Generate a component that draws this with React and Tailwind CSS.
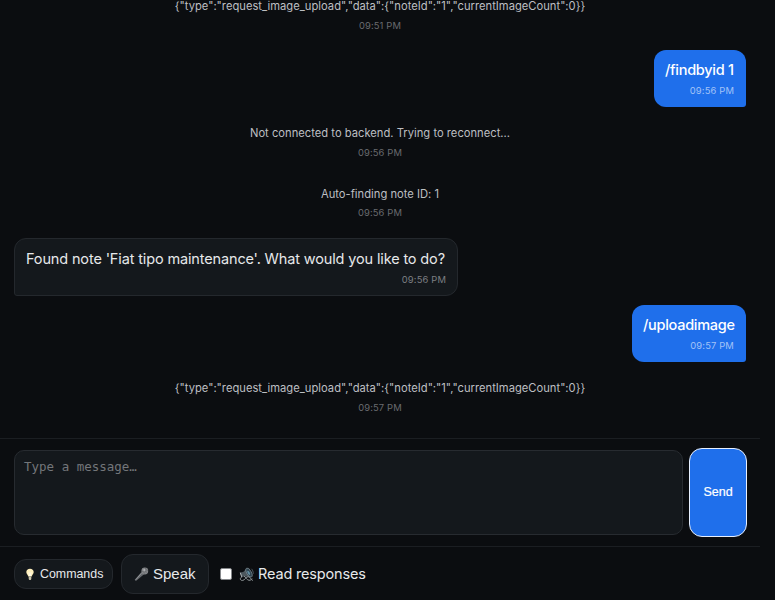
import React from "react";

const stamp = "text-[9.4px] leading-[12px] tracking-[0.15px]";

function SystemMessage({ text, time }) {
  return (
    <div className="h-[51px] shrink-0 pt-[8.5px] text-center">
      <div className="text-[11.2px] leading-[17px] tracking-[0.01px] text-[#bdbfc2]">{text}</div>
      <div className={"mt-[4.5px] text-[#696b6f] " + stamp}>{time}</div>
    </div>
  );
}

function UserMessage({ text, time, size }) {
  return (
    <div className={"h-[57px] shrink-0 self-end rounded-[12px] rounded-br-[3px] bg-[#1f6feb] pl-[11px] pr-[12px] pt-[9px] " + size}>
      <div className="whitespace-nowrap text-[14.5px] leading-[22px] tracking-[-0.28px] text-white font-[450]">{text}</div>
      <div className={"mt-[4px] text-right text-[#a3c3f7] " + stamp}>{time}</div>
    </div>
  );
}

function BulbIcon() {
  return (
    <svg className="h-[13px] w-[10px] shrink-0" viewBox="0 0 10 13">
      <path d="M5 .8C2.8.8 1.3 2.2 1.3 4.1c0 1.8 1.6 2.6 1.9 4.5h3.6c.3-1.9 1.9-2.7 1.9-4.5C8.7 2.2 7.2.8 5 .8Z" fill="#fff0bd" />
      <path d="M4 4.3 4.6 8h.8L6 4.3" fill="none" stroke="#ffffff" strokeWidth=".7" />
      <path d="M3.7 8.7h2.6v2.4l-.6.9H4.3l-.6-.9Z" fill="#c9c3a9" />
    </svg>
  );
}

function MicIcon() {
  return (
    <svg className="h-[15px] w-[15px] shrink-0" viewBox="0 0 15 15">
      <path d="M8.2 4.2.7 12.7l1.2 1.3 8.8-7.2Z" fill="#66696d" />
      <path d="m7.5 6.2-5.7 6.5" stroke="#a2a5a8" strokeWidth=".7" />
      <circle cx="10.8" cy="4" r="3.4" fill="#85878a" />
      <path d="m8 3.8 3 3M9.2 2l3.8 3.7M11 1l2.8 2.8M8.5 5l4-4M10 6.4 13.8 2.5" stroke="#55585b" strokeWidth=".4" />
      <circle cx="10.2" cy="3" r="1" fill="#b4b6b8" />
    </svg>
  );
}

function SpeakerIcon() {
  return (
    <svg className="h-[15px] w-[15px] shrink-0" viewBox="0 0 15 15">
      <path d="M1 5.5 4.2 5 8 1.2l4.6 8.5-6.9-.2L2.5 10Z" fill="#4d575d" />
      <ellipse cx="10" cy="5.6" rx="2.3" ry="5" transform="rotate(-28 10 5.6)" fill="#30444f" stroke="#7c8c95" strokeWidth=".7" />
      <ellipse cx="9.7" cy="5.8" rx="1" ry="2.3" transform="rotate(-28 9.7 5.8)" fill="#638fa4" />
      <path d="m1.3 5.7 1.4 4.2" stroke="#b1b5b7" strokeWidth="1" />
      <path d="M3.2 10c-2.5.4-2.5 3.5.1 3.5 2.8 0 3.3-3.8 5.9-3.8 2.5 0 2.2 3.1 4.7 3.8M5 9.2c1.9.6 2.6 3.9 5 4.1 1.7.1 2.6-.8 3-1.8" fill="none" stroke="#9aa0a3" strokeWidth=".9" />
      <path d="M12.4 1.8c1.2 1 1.9 3 1.9 5" fill="none" stroke="#68777f" strokeWidth=".7" />
    </svg>
  );
}

export default function App() {
  return (
    <div className="h-[600px] w-[775px] overflow-hidden bg-[#0b0d10] font-['Inter','Liberation_Sans',sans-serif]">
      <div className="flex h-full w-[760px] flex-col">
        <main className="flex h-[438px] shrink-0 flex-col justify-end gap-[9.5px] overflow-hidden pb-[15.5px] pl-[14px] pr-[14px]">
          <SystemMessage text={'{"type":"request_image_upload","data":{"noteId":"1","currentImageCount":0}}'} time="09:51 PM" />
          <UserMessage text="/findbyid 1" time="09:56 PM" size="w-[92px]" />
          <SystemMessage text="Not connected to backend. Trying to reconnect..." time="09:56 PM" />
          <SystemMessage text="Auto-finding note ID: 1" time="09:56 PM" />
          <div className="h-[58px] w-[444px] shrink-0 rounded-[12px] rounded-bl-[3px] border border-[#24282d] bg-[#14181c] px-[11px] pt-[9px]">
            <div className="whitespace-nowrap text-[14.5px] leading-[22px] tracking-[-0.14px] text-[#e6e8ea]">Found note 'Fiat tipo maintenance'. What would you like to do?</div>
            <div className={"mt-[4px] text-right text-[#7c7f83] " + stamp}>09:56 PM</div>
          </div>
          <UserMessage text="/uploadimage" time="09:57 PM" size="w-[114px]" />
          <SystemMessage text={'{"type":"request_image_upload","data":{"noteId":"1","currentImageCount":0}}'} time="09:57 PM" />
        </main>
        <form className="flex h-[108px] shrink-0 gap-[6px] border-t border-[#1b1e22] pl-[14px] pt-[11px]">
          <textarea
            className="h-[85px] w-[669px] shrink-0 resize-none rounded-[10px] border border-[#272b30] bg-[#14181c] px-[9px] py-[7px] font-['DejaVu_Sans_Mono',monospace] text-[12.5px] leading-[17px] outline-none placeholder:text-[#73767a]"
            placeholder="Type a message…"
          />
          <button type="button" className="-mt-[2px] h-[89px] w-[58px] shrink-0 rounded-[13px] border border-[#e7f0ff] bg-[#1f6feb] font-['Liberation_Sans',sans-serif] text-[12.5px] text-white [-webkit-text-stroke:0.2px_white]">
            Send
          </button>
        </form>
        <footer className="flex h-[54px] shrink-0 items-center border-t border-[#1b1e22] pl-[14px] pt-px text-[#e7e9eb]">
          <button type="button" className="flex h-[30px] w-[99px] items-center gap-[5px] rounded-[12px] border border-[#24282d] bg-[#14181c] pl-[10px] font-['Liberation_Sans',sans-serif] text-[12.4px]">
            <BulbIcon />
            <span>Commands</span>
          </button>
          <button type="button" className="ml-[8px] flex h-[40px] w-[88px] items-center gap-[4px] rounded-[12px] border border-[#24282d] bg-[#14181c] pl-[12px] font-['Liberation_Sans',sans-serif] text-[15px]">
            <MicIcon />
            <span>Speak</span>
          </button>
          <label className="ml-[11px] flex items-center text-[14.5px] tracking-[-0.16px]">
            <input type="checkbox" className="h-[12px] w-[12px] appearance-none rounded-[2px] border border-[#85878a] bg-white" />
            <span className="ml-[7px] flex"><SpeakerIcon /></span>
            <span className="ml-[4px] whitespace-nowrap">Read responses</span>
          </label>
        </footer>
      </div>
    </div>
  );
}
